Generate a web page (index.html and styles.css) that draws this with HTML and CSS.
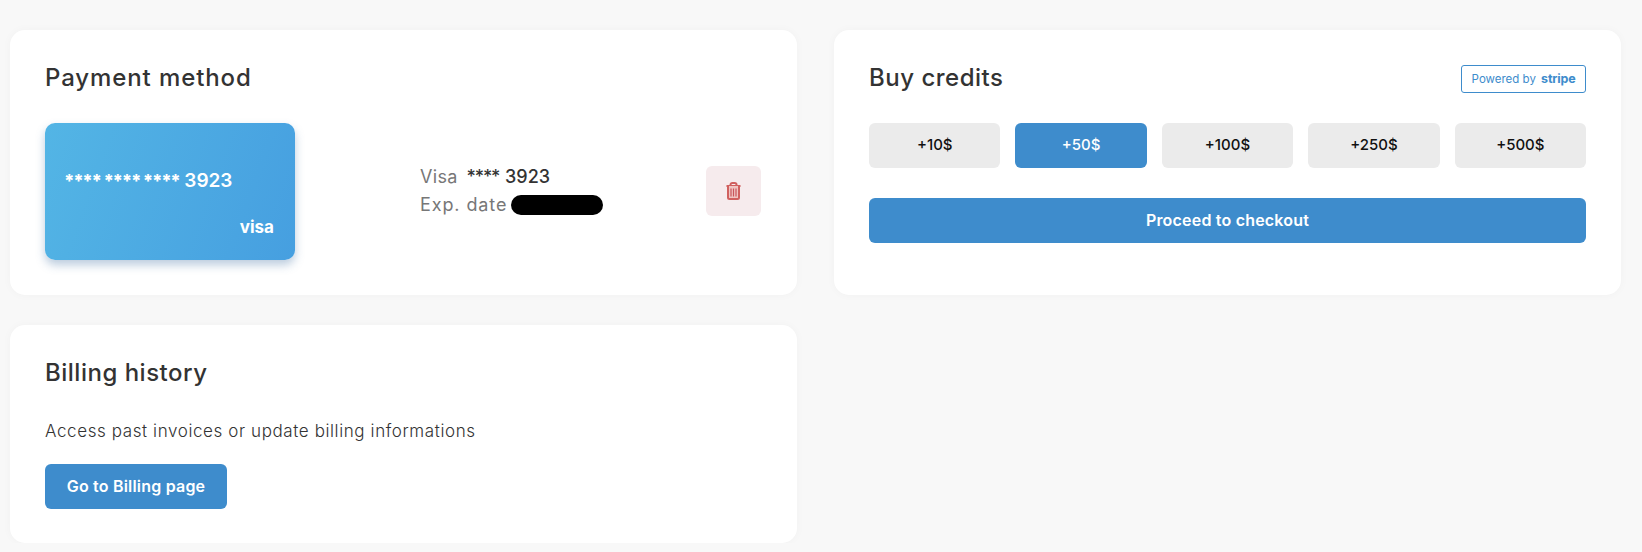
FILE: index.html
```html
<!DOCTYPE html>
<html lang="en">
<head>
<meta charset="utf-8">
<title>Billing</title>
<link rel="stylesheet" href="styles.css">
</head>
<body>
<main class="grid">
  <section class="panel">
    <h2 class="title title-wide">Payment method</h2>
    <div class="method">
      <div class="cc">
        <div class="cc-number"><span class="cc-stars">**** **** ****</span> 3923</div>
        <div class="cc-brand">visa</div>
      </div>
      <div class="info">
        <div class="info-line"><span class="label">Visa</span><span class="value"><span class="stars">****</span> 3923</span></div>
        <div class="info-line"><span class="label label-wide">Exp. date</span><span class="redact"></span></div>
      </div>
      <button class="delete" aria-label="Delete">
        <svg class="trash" viewBox="0 0 15 18" aria-hidden="true">
          <path class="trash-line" d="M0.5 4H14.5M4.5 4V2.8C4.5 1.6 5.3 1 6.3 1H8.7C9.7 1 10.5 1.6 10.5 2.8V4"/>
          <path class="trash-line trash-body" d="M2 4V15.5C2 16.4 2.6 17 3.5 17H11.5C12.4 17 13 16.4 13 15.5V4"/>
          <path class="trash-bars" d="M5 6.5V14.5M7.5 6.5V14.5M10 6.5V14.5"/>
        </svg>
      </button>
    </div>
  </section>
  <section class="panel">
    <div class="head">
      <h2 class="title">Buy credits</h2>
      <div class="badge">Powered by <span class="stripe">stripe</span></div>
    </div>
    <div class="amounts">
      <button class="amount">+10$</button>
      <button class="amount active">+50$</button>
      <button class="amount">+100$</button>
      <button class="amount">+250$</button>
      <button class="amount">+500$</button>
    </div>
    <button class="primary wide">Proceed to checkout</button>
  </section>
  <section class="panel panel-short">
    <h2 class="title">Billing history</h2>
    <p class="desc">Access past invoices or update billing informations</p>
    <button class="primary compact">Go to Billing page</button>
  </section>
</main>
</body>
</html>
```
FILE: styles.css
```css
* { box-sizing: border-box; }
body {
  margin: 0;
  background: #f8f8f8;
  font-family: Inter, "Open Sans", sans-serif;
  color: #333;
}
.grid {
  display: grid;
  grid-template-columns: 787px 787px;
  column-gap: 37px;
  row-gap: 30px;
  padding: 30px 0 0 10px;
  align-items: start;
}
.panel {
  background: #fff;
  border-radius: 15px;
  padding: 35px;
  box-shadow: 0 0 10px rgba(0,0,0,.03);
  height: 265px;
}
.panel-short { height: 218px; }
.title {
  margin: 0;
  height: 28px;
  font-size: 24px;
  line-height: 26px;
  font-weight: 550;
  letter-spacing: .5px;
  color: #333;
}
.title-wide { letter-spacing: .9px; }
.head { display: flex; justify-content: space-between; align-items: flex-start; }
.method { display: flex; align-items: center; margin-top: 30px; }
.cc {
  width: 250px;
  height: 137px;
  border-radius: 10px;
  padding: 46px 21px 0 19px;
  background: linear-gradient(110deg, #53b5e5, #469fe0);
  box-shadow: 0 5px 10px rgba(60,110,160,.35);
  color: #fff;
  display: flex;
  flex-direction: column;
  flex: none;
}
.cc-number { font-size: 19px; font-weight: 600; line-height: 24px; white-space: nowrap; }
.cc-stars { font-size: 18px; font-weight: 800; letter-spacing: -1.3px; }
.cc-brand { font-size: 17px; font-weight: 700; text-align: right; margin-top: 24px; line-height: 20px; }
.info { margin: 0 0 2px 125px; font-size: 18px; color: #777; width: 200px; }
.info-line { display: flex; align-items: center; height: 28px; white-space: nowrap; }
.label { letter-spacing: .3px; }
.label-wide { letter-spacing: .9px; }
.value { margin-left: 9px; font-weight: 500; color: #333; }
.stars { letter-spacing: -1.2px; margin-right: 1px; }
.redact { display: block; width: 92px; height: 20px; border-radius: 10px; background: #000; margin-left: 4px; }
.delete {
  margin: 0 1px 1px auto;
  width: 55px;
  height: 50px;
  border: 0;
  border-radius: 6px;
  background: #f6ebed;
  display: flex;
  align-items: center;
  justify-content: center;
  padding: 0;
}
.trash { width: 15px; height: 18px; }
.trash-line { fill: none; stroke: #d0605f; stroke-width: 2; }
.trash-body { fill: #f0c4c2; }
.trash-bars { fill: none; stroke: #c9555a; stroke-width: 1.2; }
.badge {
  width: 125px;
  height: 28px;
  border: 1px solid #3e8ccc;
  border-radius: 3px;
  color: #3e8ccc;
  font-size: 11.5px;
  line-height: 26px;
  text-align: center;
  white-space: nowrap;
}
.stripe { font-weight: 700; font-size: 12.5px; margin-left: 2px; letter-spacing: -.2px; }
.amounts { display: flex; gap: 15px; margin-top: 30px; }
.amount {
  flex: 1;
  height: 45px;
  padding: 0 0 2px;
  border: 0;
  border-radius: 6px;
  background: #ebebeb;
  color: #111;
  font: 500 15px Inter, sans-serif;
}
.amount.active { background: #3e8ccc; color: #fff; }
.primary {
  display: block;
  height: 45px;
  padding: 0 0 2px;
  border: 0;
  border-radius: 6px;
  background: #3e8ccc;
  color: #fff;
  font: 600 16px Inter, sans-serif;
  letter-spacing: .2px;
}
.wide { width: 100%; margin-top: 30px; }
.desc { margin: 31px 0 0; font-size: 17px; font-weight: 300; line-height: 24px; color: #333; letter-spacing: .6px; }
.compact { margin-top: 21px; width: 182px; }
```
